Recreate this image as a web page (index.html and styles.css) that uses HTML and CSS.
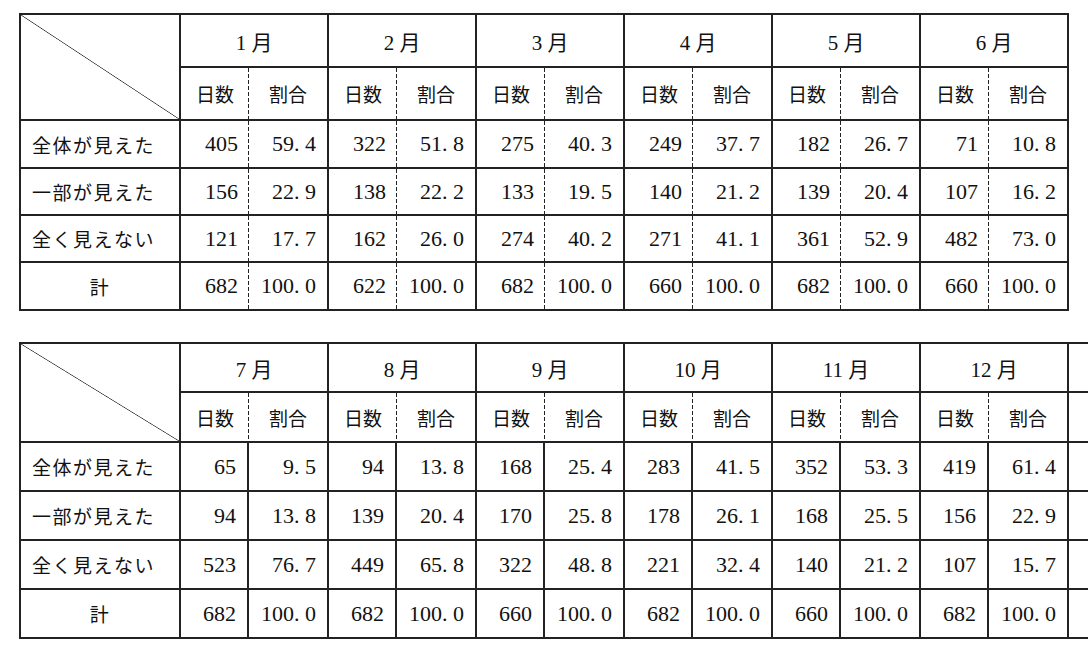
FILE: index.html
```html
<!DOCTYPE html>
<html lang="ja">
<head>
<meta charset="utf-8">
<title>表</title>
<link rel="stylesheet" href="styles.css">
</head>
<body>
<div class="page">
  <table class="tbl top">
    <colgroup>
      <col class="c-lbl">
      <col class="c-n"><col class="c-p"><col class="c-n"><col class="c-p"><col class="c-n"><col class="c-p">
      <col class="c-n"><col class="c-p"><col class="c-n"><col class="c-p"><col class="c-n"><col class="c-p">
    </colgroup>
    <tr class="h1">
      <td class="corner" rowspan="2"></td>
      <th colspan="2" class="mon">1 月</th>
      <th colspan="2" class="mon">2 月</th>
      <th colspan="2" class="mon">3 月</th>
      <th colspan="2" class="mon">4 月</th>
      <th colspan="2" class="mon">5 月</th>
      <th colspan="2" class="mon">6 月</th>
    </tr>
    <tr class="h2">
      <th class="sub d">日数</th><th class="sub">割合</th>
      <th class="sub d">日数</th><th class="sub">割合</th>
      <th class="sub d">日数</th><th class="sub">割合</th>
      <th class="sub d">日数</th><th class="sub">割合</th>
      <th class="sub d">日数</th><th class="sub">割合</th>
      <th class="sub d">日数</th><th class="sub">割合</th>
    </tr>
    <tr class="r1">
      <td class="lbl">全体が見えた</td>
      <td class="num d">405</td><td class="num">59.&nbsp;4</td>
      <td class="num d">322</td><td class="num">51.&nbsp;8</td>
      <td class="num d">275</td><td class="num">40.&nbsp;3</td>
      <td class="num d">249</td><td class="num">37.&nbsp;7</td>
      <td class="num d">182</td><td class="num">26.&nbsp;7</td>
      <td class="num d">71</td><td class="num">10.&nbsp;8</td>
    </tr>
    <tr class="r2">
      <td class="lbl">一部が見えた</td>
      <td class="num d">156</td><td class="num">22.&nbsp;9</td>
      <td class="num d">138</td><td class="num">22.&nbsp;2</td>
      <td class="num d">133</td><td class="num">19.&nbsp;5</td>
      <td class="num d">140</td><td class="num">21.&nbsp;2</td>
      <td class="num d">139</td><td class="num">20.&nbsp;4</td>
      <td class="num d">107</td><td class="num">16.&nbsp;2</td>
    </tr>
    <tr class="r3">
      <td class="lbl">全く見えない</td>
      <td class="num d">121</td><td class="num">17.&nbsp;7</td>
      <td class="num d">162</td><td class="num">26.&nbsp;0</td>
      <td class="num d">274</td><td class="num">40.&nbsp;2</td>
      <td class="num d">271</td><td class="num">41.&nbsp;1</td>
      <td class="num d">361</td><td class="num">52.&nbsp;9</td>
      <td class="num d">482</td><td class="num">73.&nbsp;0</td>
    </tr>
    <tr class="r4">
      <td class="lbl total">計</td>
      <td class="num d">682</td><td class="num">100.&nbsp;0</td>
      <td class="num d">622</td><td class="num">100.&nbsp;0</td>
      <td class="num d">682</td><td class="num">100.&nbsp;0</td>
      <td class="num d">660</td><td class="num">100.&nbsp;0</td>
      <td class="num d">682</td><td class="num">100.&nbsp;0</td>
      <td class="num d">660</td><td class="num">100.&nbsp;0</td>
    </tr>
  </table>

  <div class="clip">
  <table class="tbl bottom">
    <colgroup>
      <col class="c-lbl">
      <col class="c-n"><col class="c-p"><col class="c-n"><col class="c-p"><col class="c-n"><col class="c-p">
      <col class="c-n"><col class="c-p"><col class="c-n"><col class="c-p"><col class="c-n"><col class="c-p">
      <col class="c-x">
    </colgroup>
    <tr class="h1">
      <td class="corner" rowspan="2"></td>
      <th colspan="2" class="mon">7 月</th>
      <th colspan="2" class="mon">8 月</th>
      <th colspan="2" class="mon">9 月</th>
      <th colspan="2" class="mon">10 月</th>
      <th colspan="2" class="mon">11 月</th>
      <th colspan="2" class="mon">12 月</th>
      <th class="mon"></th>
    </tr>
    <tr class="h2">
      <th class="sub d">日数</th><th class="sub">割合</th>
      <th class="sub d">日数</th><th class="sub">割合</th>
      <th class="sub d">日数</th><th class="sub">割合</th>
      <th class="sub d">日数</th><th class="sub">割合</th>
      <th class="sub d">日数</th><th class="sub">割合</th>
      <th class="sub d">日数</th><th class="sub">割合</th>
      <th class="sub"></th>
    </tr>
    <tr class="r1">
      <td class="lbl">全体が見えた</td>
      <td class="num">65</td><td class="num">9.&nbsp;5</td>
      <td class="num">94</td><td class="num">13.&nbsp;8</td>
      <td class="num">168</td><td class="num">25.&nbsp;4</td>
      <td class="num">283</td><td class="num">41.&nbsp;5</td>
      <td class="num">352</td><td class="num">53.&nbsp;3</td>
      <td class="num">419</td><td class="num">61.&nbsp;4</td>
      <td class="num"></td>
    </tr>
    <tr class="r2">
      <td class="lbl">一部が見えた</td>
      <td class="num">94</td><td class="num">13.&nbsp;8</td>
      <td class="num">139</td><td class="num">20.&nbsp;4</td>
      <td class="num">170</td><td class="num">25.&nbsp;8</td>
      <td class="num">178</td><td class="num">26.&nbsp;1</td>
      <td class="num">168</td><td class="num">25.&nbsp;5</td>
      <td class="num">156</td><td class="num">22.&nbsp;9</td>
      <td class="num"></td>
    </tr>
    <tr class="r3">
      <td class="lbl">全く見えない</td>
      <td class="num">523</td><td class="num">76.&nbsp;7</td>
      <td class="num">449</td><td class="num">65.&nbsp;8</td>
      <td class="num">322</td><td class="num">48.&nbsp;8</td>
      <td class="num">221</td><td class="num">32.&nbsp;4</td>
      <td class="num">140</td><td class="num">21.&nbsp;2</td>
      <td class="num">107</td><td class="num">15.&nbsp;7</td>
      <td class="num"></td>
    </tr>
    <tr class="r4">
      <td class="lbl total">計</td>
      <td class="num">682</td><td class="num">100.&nbsp;0</td>
      <td class="num">682</td><td class="num">100.&nbsp;0</td>
      <td class="num">660</td><td class="num">100.&nbsp;0</td>
      <td class="num">682</td><td class="num">100.&nbsp;0</td>
      <td class="num">660</td><td class="num">100.&nbsp;0</td>
      <td class="num">682</td><td class="num">100.&nbsp;0</td>
      <td class="num"></td>
    </tr>
  </table>
  </div>
</div>
</body>
</html>
```

FILE: styles.css
```css
html, body {
  margin: 0;
  padding: 0;
  background: #ffffff;
  overflow: hidden;
}

.page {
  padding: 13px 0 0 19px;
  display: flex;
  flex-direction: column;
  gap: 31px;
}

.clip {
  width: 1069px;
  overflow: hidden;
}

.tbl {
  border-collapse: separate;
  border-spacing: 0;
  table-layout: fixed;
  width: 1050px;
  border-top: 2px solid #222;
  border-left: 2px solid #222;
  color: #111;
  font-family: "Liberation Serif", "Noto Sans CJK JP", serif;
}

.tbl.bottom {
  width: 1110px;
}

.c-lbl { width: 160px; }
.c-n { width: 68px; }
.c-p { width: 80px; }
.c-x { width: 60px; }

.tbl th,
.tbl td {
  border-right: 2px solid #222;
  border-bottom: 2px solid #222;
  padding: 0;
  white-space: nowrap;
  overflow: hidden;
  vertical-align: middle;
  font-weight: normal;
}

.tbl .d {
  border-right: 0;
  background-image: repeating-linear-gradient(to bottom, #222 0, #222 4px, transparent 4px, transparent 6px);
  background-size: 1px 100%;
  background-position: right top;
  background-repeat: no-repeat;
}

.corner {
  background-image: linear-gradient(to top right, transparent calc(50% - 0.7px), #333 50%, transparent calc(50% + 0.7px));
}

.mon {
  text-align: center;
  font-size: 21px;
  font-family: "Liberation Serif", "Noto Sans CJK JP", serif;
}

.sub {
  text-align: center;
  font-size: 19px;
  font-family: "Noto Sans CJK JP", sans-serif;
}

.lbl {
  text-align: left;
  padding-left: 11px !important;
  font-size: 19px;
  font-family: "Noto Sans CJK JP", sans-serif;
  letter-spacing: 1.5px;
}

.lbl.total {
  text-align: center;
  padding-left: 0 !important;
}

.num {
  text-align: right;
  padding-right: 11px !important;
  font-size: 22px;
}

.top .h1 { height: 53px; }
.top .h2 { height: 53px; }
.top .r1 { height: 48px; }
.top .r2 { height: 47px; }
.top .r3 { height: 47px; }
.top .r4 { height: 48px; }

.bottom .h1 { height: 49px; }
.bottom .h2 { height: 50px; }
.bottom .r1 { height: 49px; }
.bottom .r2 { height: 49px; }
.bottom .r3 { height: 49px; }
.bottom .r4 { height: 49px; }
```
